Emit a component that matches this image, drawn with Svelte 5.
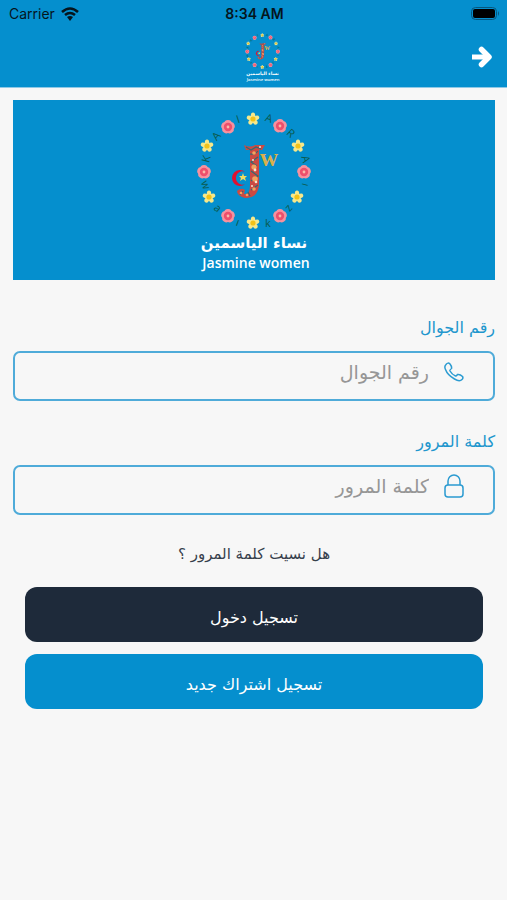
<script lang="ts">
let phone = $state("");
let password = $state("");

const roses = [[38, 22], [90, 21], [14, 67], [114, 67], [38, 111], [90, 111]];
const stars = [[63, 14], [17, 41], [108, 41], [19, 92], [107, 92], [63, 118]];
const petals = [0, 72, 144, 216, 288];
const ring = [
	{ char: "K", x: 16, y: 54, angle: -75 },
	{ char: "A", x: 26, y: 31, angle: -48 },
	{ char: "I", x: 48, y: 14, angle: -18 },
	{ char: "A", x: 79, y: 13, angle: 18 },
	{ char: "R", x: 101, y: 28, angle: 42 },
	{ char: "A", x: 116, y: 54, angle: 75 },
	{ char: "ı", x: 116, y: 80, angle: 105 },
	{ char: "z", x: 100, y: 104, angle: 130 },
	{ char: "k", x: 78, y: 118, angle: 0 },
	{ char: "ı", x: 48, y: 117, angle: 20 },
	{ char: "a", x: 28, y: 103, angle: 40 },
	{ char: "w", x: 16, y: 80, angle: 70 },
];

function submit(event: SubmitEvent) {
	event.preventDefault();
}
</script>

{#snippet logo(kind: string)}
	<svg class="logo {kind}" viewBox="0 0 128 170" role="img" aria-label="Jasmine women">
		{#each ring as item}
			<text class="ring" text-anchor="middle" transform="translate({item.x} {item.y}) rotate({item.angle})" y="4">{item.char}</text>
		{/each}
		{#each roses as [x, y]}
			<g transform="translate({x} {y})">
				{#each petals as angle}
					<circle cy="-3" r="3.9" fill="#f7929f" transform="rotate({angle})" />
				{/each}
				<circle r="4.2" fill="#ee4f6c" />
				<circle r="1.4" fill="#f9b9a8" />
			</g>
		{/each}
		{#each stars as [x, y]}
			<g transform="translate({x} {y})">
				{#each petals as angle}
					<ellipse cy="-3.6" rx="2.2" ry="2.9" fill="#f7e88a" transform="rotate({angle})" />
				{/each}
				<circle r="2.6" fill="#f3c218" />
			</g>
		{/each}
		<path d="M55 66.750A8 8 0 1 0 55 79.250A6.700 6.700 0 1 1 55 66.750z" fill="#e01130" />
		<path d="M53 68l1 3h3l-2 2 1 3-3-2-3 2 1-3-2-2h3z" fill="#f0dc60" />
		<path d="M54 40Q60 43 65 40H75L72 45H69V80Q68 93 55 93Q47 91 47 86Q51 82 55 85L54 89Q60 90 60 80V45H56z" fill="#cb4a43" />
		<path d="M56 42l5 3 5-3 5 2M60 49q5 1 8-3M68 52l-7 5 6 4M61 66l7 5-7 5M68 80l-7 5M60 91l-2-4M50 90l3-4" fill="none" stroke="#356a70" stroke-width="1.200" />
		<g fill="#f2a25f">
			<circle cx="64" cy="48" r="1.800" />
			<circle cx="64" cy="62" r="2.600" />
			<circle cx="65" cy="74" r="2.800" />
			<circle cx="64" cy="84" r="1.800" />
			<circle cx="57" cy="90" r="1.300" />
			<circle cx="51" cy="88" r="1.300" />
		</g>
		<g fill="#f6e6d0">
			<circle cx="65" cy="65" r="1.400" />
			<circle cx="63" cy="55" r="1" />
			<circle cx="66" cy="77" r="1.300" />
			<circle cx="70" cy="42" r="1" />
			<circle cx="62" cy="81" r="1" />
		</g>
		<text class="initial" x="70" y="61">w</text>
		<text class="name-ar" x="64" y="143" text-anchor="middle">نساء الياسمين</text>
		<text class="name-en" x="66" y="163" text-anchor="middle">Jasmine women</text>
	</svg>
{/snippet}

<div class="screen" dir="rtl" lang="ar">
	<header>
		<div class="status" dir="ltr">
			<div class="carrier">
				<span>Carrier</span>
				<svg class="wifi" viewBox="0 0 18 14" aria-hidden="true">
					<path d="M1 5Q9-2 17 5M4 8q5-4 10 0" fill="none" stroke="#05151d" stroke-width="2.600" />
					<path d="M6 10q3-2 6 0l-3 4z" fill="#05151d" />
				</svg>
			</div>
			<time>8:34 AM</time>
			<svg class="battery" viewBox="0 0 29 14" aria-hidden="true">
				<rect x="0.500" y="0.500" width="25" height="12" rx="4" fill="none" stroke="#06577e" />
				<rect x="2" y="2" width="22" height="9" rx="2" fill="#000" />
				<path d="M27 4q2 2.500 0 5z" fill="#06577e" />
			</svg>
		</div>
		<div class="bar">
			<button class="back" type="button" aria-label="رجوع">
				<svg viewBox="0 0 22 22" aria-hidden="true">
					<path d="M1 8.500H18V13.500H1z" fill="#fff" />
					<path d="M10.500 3.500l7.500 7.500-7.500 7.500" fill="none" stroke="#fff" stroke-width="5.500" stroke-linecap="round" stroke-linejoin="round" />
				</svg>
			</button>
			{@render logo("small")}
		</div>
	</header>

	<main>
		<div class="banner">
			{@render logo("large")}
		</div>

		<form onsubmit={submit}>
			<label for="phone">رقم الجوال</label>
			<div class="field">
				<svg viewBox="0 0 20 20" aria-hidden="true">
					<path d="M2 2.500Q4 0 6 2Q8 4.500 7.500 6.500Q5.500 8 6 9Q8 12.500 11.500 14Q12.500 14 13.500 12.500Q16 12 18.500 14.500Q19.500 16 18 17.500Q15.500 20 10.500 17Q3.500 13 1.500 7.500Q0 4.500 2 2.500z" />
				</svg>
				<input id="phone" type="tel" placeholder="رقم الجوال" bind:value={phone} />
			</div>

			<label for="password">كلمة المرور</label>
			<div class="field">
				<svg class="lock" viewBox="0 0 20 24" aria-hidden="true">
					<path d="M4 11V7a6 6 0 0 1 12 0v4" />
					<rect x="1" y="11" width="18" height="12" rx="3" />
				</svg>
				<input id="password" type="password" placeholder="كلمة المرور" bind:value={password} />
			</div>

			<a class="forgot" href="#forgot">هل نسيت كلمة المرور ؟</a>

			<div class="actions">
				<button class="login" type="submit">تسجيل دخول</button>
				<button class="register" type="button">تسجيل اشتراك جديد</button>
			</div>
		</form>
	</main>
</div>

<style>
	:global(body) {
		margin: 0;
		background: #f7f7f7;
	}

	.screen {
		font-family: "DejaVu Sans", sans-serif;
		color: #1e2a3a;
	}

	header {
		background: #058fce;
		border-bottom: 1px solid #8fc9e6;
	}

	.status {
		display: grid;
		grid-template-columns: 1fr auto 1fr;
		align-items: center;
		height: 27px;
		padding: 0 7px 0 9px;
		font-family: Inter, sans-serif;
		font-size: 14px;
		color: #05151d;
	}

	.carrier {
		display: flex;
		align-items: center;
		gap: 6px;
	}

	.wifi {
		width: 18px;
		height: 14px;
	}

	time {
		font-weight: 600;
	}

	.battery {
		width: 29px;
		height: 14px;
		justify-self: end;
	}

	.bar {
		display: grid;
		grid-template-columns: 1fr auto 1fr;
		align-items: center;
		height: 60px;
		padding: 0 14px 0 33px;
	}

	.back {
		justify-self: start;
		display: flex;
		padding: 0;
		background: none;
		border: none;
		cursor: pointer;
	}

	.back svg {
		width: 22px;
		height: 22px;
	}

	.logo {
		display: block;
		direction: ltr;
	}

	.small {
		height: 52px;
	}

	.large {
		height: 170px;
	}

	.ring {
		font: 11px "Open Sans", sans-serif;
		fill: #0b5a4c;
	}

	.initial {
		font: bold 25px "Liberation Serif", serif;
		fill: #d9b04c;
	}

	.name-ar {
		font: bold 15px "DejaVu Sans", sans-serif;
		fill: #fff;
	}

	.name-en {
		font: 600 14px "Open Sans", sans-serif;
		fill: #fff;
	}

	main {
		padding: 12px 12px 24px 13px;
	}

	.banner {
		display: flex;
		justify-content: center;
		padding: 5px 0;
		background: #058fce;
	}

	form {
		display: flex;
		flex-direction: column;
		padding-top: 34px;
	}

	label {
		margin-bottom: 10px;
		font-size: 16px;
		line-height: 27px;
		color: #2196cd;
	}

	.field {
		display: flex;
		align-items: center;
		gap: 15px;
		height: 38px;
		margin-bottom: 27px;
		padding: 0 29px 8px 12px;
		border: 2px solid #4fabd9;
		border-radius: 7px;
	}

	.field svg {
		flex: none;
		width: 20px;
		height: 20px;
		fill: none;
		stroke: #2b9bd1;
		stroke-width: 1.5;
	}

	.field .lock {
		height: 24px;
	}

	input {
		flex: 1;
		min-width: 0;
		height: 36px;
		padding: 0;
		border: none;
		outline: none;
		background: none;
		font-family: inherit;
		font-size: 19px;
		line-height: 36px;
		text-align: right;
		color: #1e2a3a;
	}

	input::placeholder {
		overflow: visible;
		line-height: 36px;
		color: #969696;
		opacity: 1;
	}

	.field:focus-within {
		border-color: #056fa2;
	}

	.forgot {
		align-self: center;
		font-size: 15px;
		line-height: 24px;
		color: #36404c;
		text-decoration: none;
	}

	.actions {
		display: flex;
		flex-direction: column;
		gap: 12px;
		padding: 21px 12px 0;
	}

	.actions button {
		height: 55px;
		padding: 6px 0 0;
		border: none;
		border-radius: 12px;
		font-family: inherit;
		font-size: 16px;
		color: #fff;
		cursor: pointer;
	}

	.actions .login {
		background: #1e2a3a;
	}

	.actions .register {
		background: #058fce;
	}
</style>
